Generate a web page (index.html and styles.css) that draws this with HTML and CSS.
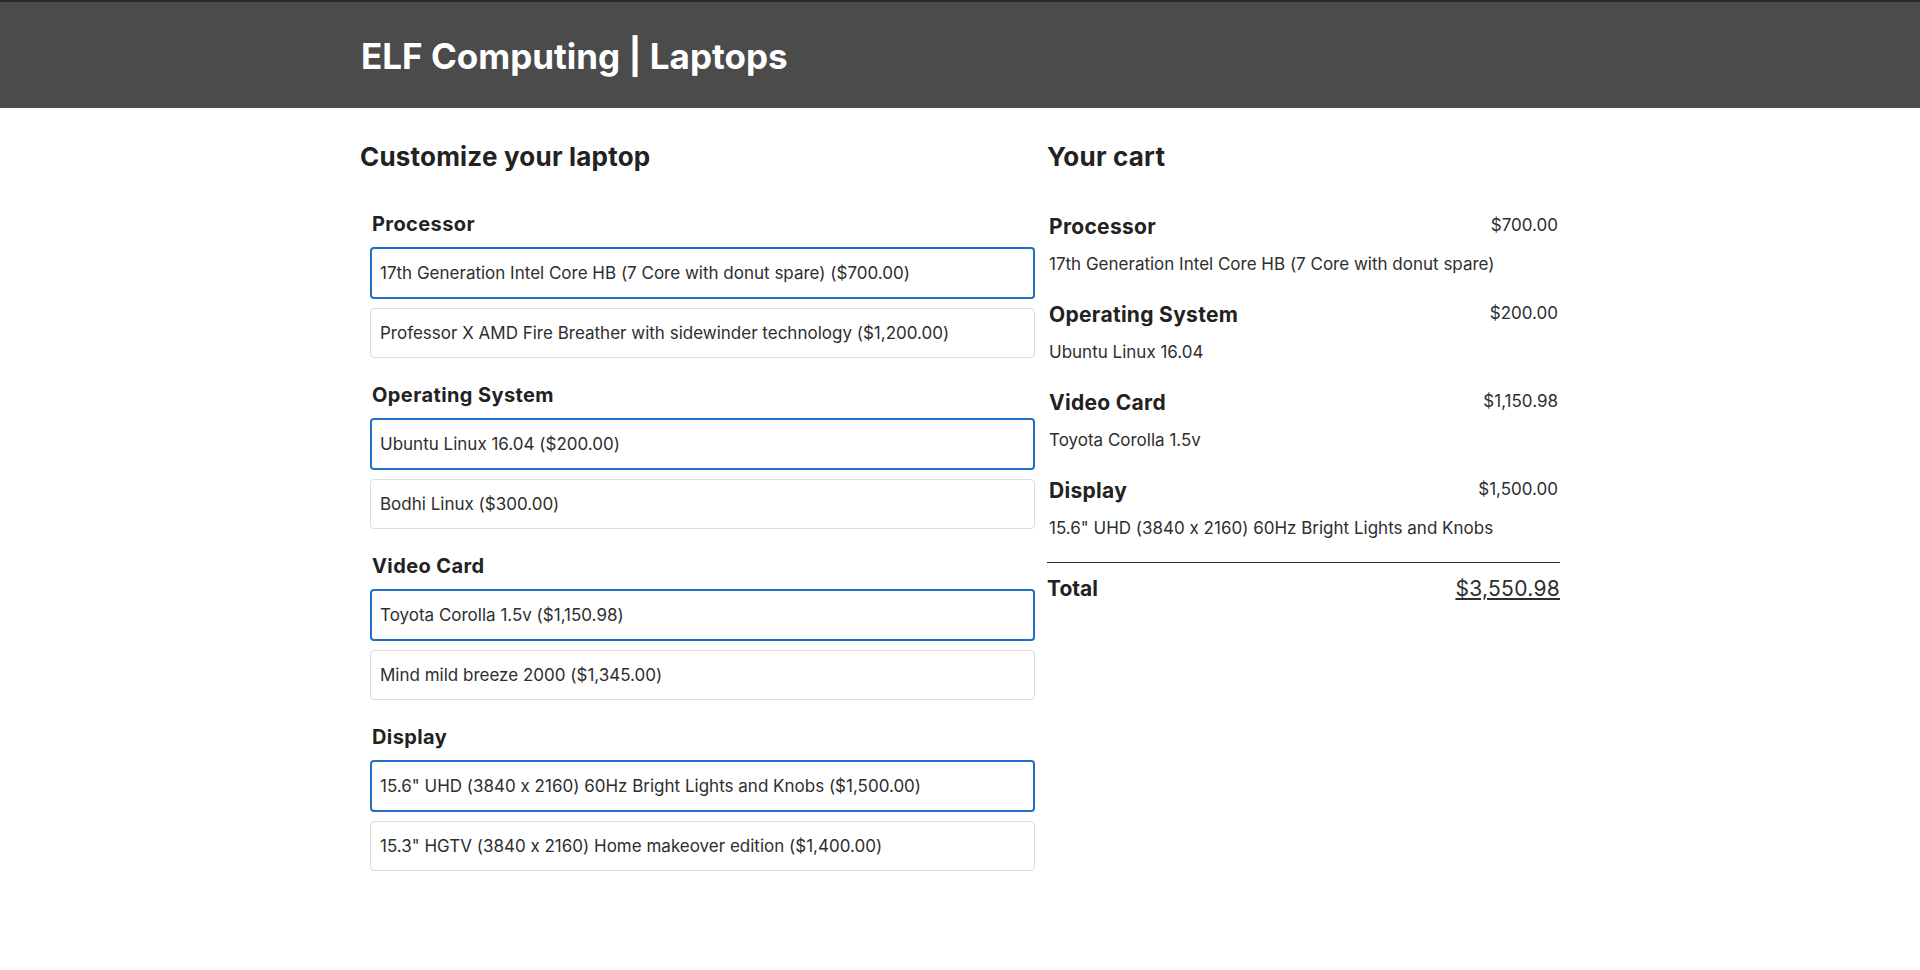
FILE: index.html
```html
<!DOCTYPE html>
<html lang="en">
<head>
<meta charset="utf-8">
<title>ELF Computing | Laptops</title>
<link rel="stylesheet" href="styles.css">
</head>
<body>
<header class="site-header">
  <div class="container">
    <h1 class="site-title">ELF Computing | Laptops</h1>
  </div>
</header>
<main class="container main-grid">
  <form class="customize">
    <h2 class="section-title">Customize your laptop</h2>
    <fieldset class="feature">
      <h3 class="feature-name">Processor</h3>
      <div class="option selected">17th Generation Intel Core HB (7 Core with donut spare) ($700.00)</div>
      <div class="option">Professor X AMD Fire Breather with sidewinder technology ($1,200.00)</div>
    </fieldset>
    <fieldset class="feature">
      <h3 class="feature-name">Operating System</h3>
      <div class="option selected">Ubuntu Linux 16.04 ($200.00)</div>
      <div class="option">Bodhi Linux ($300.00)</div>
    </fieldset>
    <fieldset class="feature">
      <h3 class="feature-name">Video Card</h3>
      <div class="option selected">Toyota Corolla 1.5v ($1,150.98)</div>
      <div class="option">Mind mild breeze 2000 ($1,345.00)</div>
    </fieldset>
    <fieldset class="feature">
      <h3 class="feature-name">Display</h3>
      <div class="option selected">15.6" UHD (3840 x 2160) 60Hz Bright Lights and Knobs ($1,500.00)</div>
      <div class="option">15.3" HGTV (3840 x 2160) Home makeover edition ($1,400.00)</div>
    </fieldset>
  </form>
  <section class="cart">
    <h2 class="section-title">Your cart</h2>
    <div class="cart-item">
      <div class="cart-row">
        <div class="cart-feature">Processor</div>
        <div class="cart-price">$700.00</div>
      </div>
      <div class="cart-desc">17th Generation Intel Core HB (7 Core with donut spare)</div>
    </div>
    <div class="cart-item">
      <div class="cart-row">
        <div class="cart-feature">Operating System</div>
        <div class="cart-price">$200.00</div>
      </div>
      <div class="cart-desc">Ubuntu Linux 16.04</div>
    </div>
    <div class="cart-item">
      <div class="cart-row">
        <div class="cart-feature">Video Card</div>
        <div class="cart-price">$1,150.98</div>
      </div>
      <div class="cart-desc">Toyota Corolla 1.5v</div>
    </div>
    <div class="cart-item">
      <div class="cart-row">
        <div class="cart-feature">Display</div>
        <div class="cart-price">$1,500.00</div>
      </div>
      <div class="cart-desc">15.6" UHD (3840 x 2160) 60Hz Bright Lights and Knobs</div>
    </div>
    <div class="cart-total">
      <div class="total-label">Total</div>
      <div class="total-value">$3,550.98</div>
    </div>
  </section>
</main>
</body>
</html>
```
FILE: styles.css
```css
* { box-sizing: border-box; }
html, body { margin: 0; padding: 0; }
body {
  font-family: Inter, "Noto Sans", "Liberation Sans", sans-serif;
  font-feature-settings: "calt" 0;
  color: #222;
  background: #fff;
}
.container {
  width: 1200px;
  margin: 0 auto;
}
.site-header {
  background: #4b4b4b;
  border-top: 2px solid #2a2a2a;
  height: 108px;
  padding-top: 34px;
}
.site-title {
  margin: 0;
  color: #fff;
  font-size: 35px;
  line-height: 40px;
  font-weight: 700;
  padding-left: 1px;
}
.main-grid {
  display: grid;
  grid-template-columns: 675px 513px;
  column-gap: 12px;
  align-items: start;
}
.section-title {
  margin: 34px 0 0;
  font-size: 26px;
  line-height: 30px;
  font-weight: 700;
  letter-spacing: 0.2px;
  color: #222;
}
.customize { margin: 0; }
.feature {
  margin: 0;
  border: none;
  padding: 0 0 0 10px;
}
.feature + .feature { margin-top: 25px; }
.customize .section-title + .feature { margin-top: 40px; }
.feature-name {
  margin: 0 0 11px;
  padding-left: 2px;
  font-size: 20px;
  line-height: 24px;
  font-weight: 700;
  letter-spacing: 0.4px;
  color: #222;
}
.option {
  display: flex;
  align-items: center;
  height: 50px;
  border: 1px solid #dcdcdc;
  border-radius: 4px;
  padding: 0 9px;
  font-size: 17px;
  color: #2e2e2e;
}
.option.selected {
  height: 52px;
  border: 2px solid #1f6fc6;
  padding: 0 8px;
  margin-bottom: 9px;
}
.cart { padding: 0; }
.cart .section-title { margin-bottom: 43px; }
.cart-item {
  padding: 0 2px;
}
.cart-item + .cart-item { margin-top: 27px; }
.cart-row {
  display: flex;
  justify-content: space-between;
  align-items: flex-start;
}
.cart-feature {
  font-size: 21px;
  line-height: 24px;
  font-weight: 700;
  letter-spacing: 0.3px;
  color: #222;
}
.cart-price {
  font-size: 17px;
  line-height: 20px;
  color: #2e2e2e;
}
.cart-desc {
  margin-top: 13px;
  font-size: 17px;
  line-height: 24px;
  color: #2e2e2e;
}
.cart-total {
  display: flex;
  justify-content: space-between;
  align-items: flex-start;
  border-top: 1px solid #2a2a2a;
  margin-top: 22px;
  padding-top: 14px;
}
.total-label {
  font-size: 21px;
  line-height: 24px;
  font-weight: 700;
  color: #222;
}
.total-value {
  font-size: 21px;
  line-height: 24px;
  letter-spacing: 0.3px;
  text-decoration: underline;
  color: #2e2e2e;
}
```
